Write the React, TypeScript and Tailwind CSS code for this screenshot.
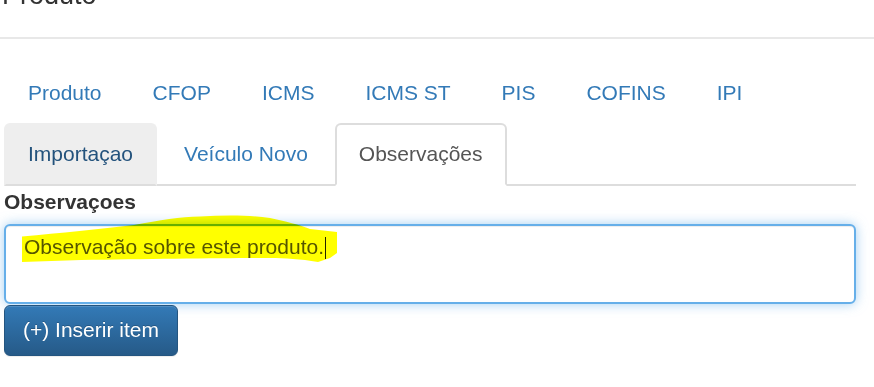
import { FC } from 'react';

const topTabs = ['Produto', 'CFOP', 'ICMS', 'ICMS ST', 'PIS', 'COFINS', 'IPI'];

type TabProps = {
  label: string;
  state?: 'active' | 'hover' | 'idle';
};

const Tab: FC<TabProps> = ({ label, state = 'idle' }) => {
  const base =
    'block whitespace-nowrap rounded-t-[6px] border-2 px-[22px] pt-[14px] pb-[15px] leading-[30px]';
  const look =
    state === 'active'
      ? 'border-[#ddd] border-b-transparent bg-white text-[#555]'
      : state === 'hover'
        ? 'border-[#eee] border-b-[#ddd] bg-[#eee] text-[#23527c]'
        : 'border-transparent text-[#337ab7]';

  return (
    <li className="mr-[3px] -mb-[2px]">
      <a href="#" className={`${base} ${look}`}>
        {label}
      </a>
    </li>
  );
};

export default function App() {
  return (
    <div
      className="relative h-[387px] w-[874px] overflow-hidden bg-white text-[21px] text-[#333]"
      style={{ fontFamily: '"Liberation Sans", Arial, sans-serif' }}
    >
      <h4 className="-mt-[20px] ml-[2px] text-[27px] leading-[30px] font-normal text-[#333]">
        Produto
      </h4>
      <div className="mt-[27px] h-[2px] w-full bg-[#e8e8e8]" />

      <div className="ml-[4px] w-[852px]">
        <ul className="mt-[23px] flex flex-wrap border-b-2 border-[#ddd]">
          {topTabs.map((t) => (
            <Tab key={t} label={t} />
          ))}
          <Tab label="Importaçao" state="hover" />
          <Tab label="Veículo Novo" />
          <Tab label="Observações" state="active" />
        </ul>

        <label className="mt-[1px] mb-[7px] block font-bold leading-[30px]">Observaçoes</label>

        <div className="h-[80px] rounded-[6px] border-2 border-[#66afe9] bg-white px-[18px] pt-[6px] leading-[30px] text-[#555] shadow-[inset_0_1px_1px_rgba(0,0,0,0.075),0_0_12px_rgba(102,175,233,0.6)]">
          Observação sobre este produto.
          <span className="ml-[1px] inline-block h-[22px] w-[1px] translate-y-[5px] bg-[#222]" />
        </div>

        <button
          type="button"
          className="mt-[1px] rounded-[6px] border border-[#245580] bg-gradient-to-b from-[#337ab7] to-[#265a88] px-[18px] pt-[9px] pb-[10px] leading-[30px] text-white shadow-[inset_0_1px_0_rgba(255,255,255,0.15),0_1px_1px_rgba(0,0,0,0.075)] [text-shadow:0_-1px_0_rgba(0,0,0,0.2)]"
        >
          (+) Inserir item
        </button>
      </div>

      {/* marker highlight drawn over the text */}
      <svg
        className="pointer-events-none absolute left-0 top-0 mix-blend-multiply"
        width="874"
        height="387"
        viewBox="0 0 874 387"
      >
        <path
          d="M22,236.5 C60,233 100,229 134,225 C160,220 180,217 200,216.5 C225,215 250,215 270,218 C285,221 300,225 310,229 L337,232 L337,253 L330,258 L318,262 C300,259 285,258 270,258 C230,258 150,259 81,260 L22,262 Z"
          fill="#ffff00"
        />
      </svg>
    </div>
  );
}
